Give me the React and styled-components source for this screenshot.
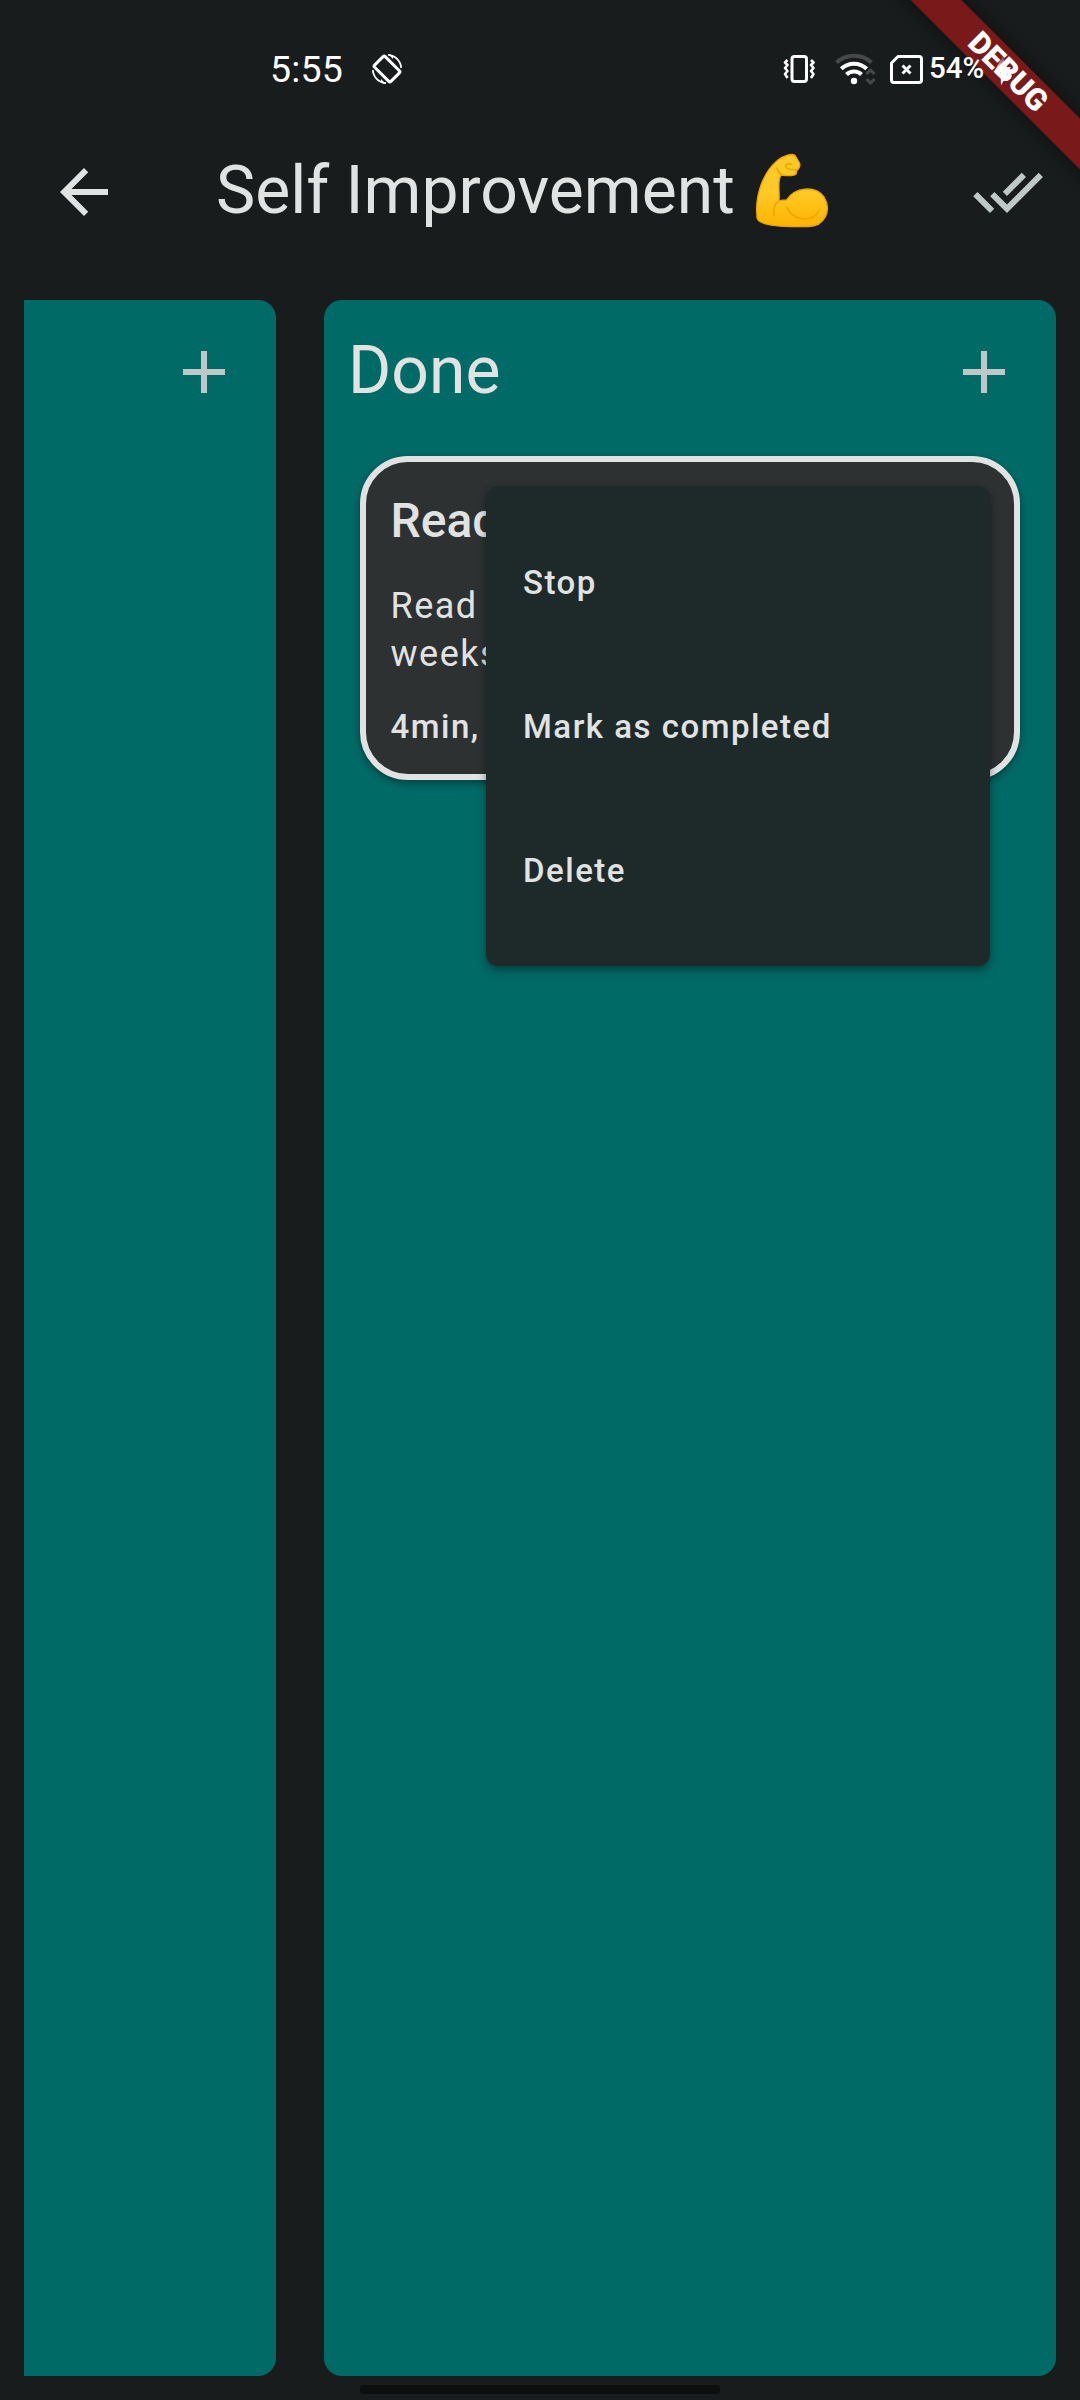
import React from "react";
import styled, { createGlobalStyle } from "styled-components";

const Global = createGlobalStyle`
  * { box-sizing: border-box; }
  body { margin: 0; background: #191c1c; }
`;

const Screen = styled.div`
  position: relative;
  width: 1080px;
  height: 2400px;
  overflow: hidden;
  display: flex;
  flex-direction: column;
  background: #191c1c;
  color: #e1e3e2;
  font-family: Roboto, sans-serif;
`;

const StatusBar = styled.div`
  position: relative;
  z-index: 2;
  height: 120px;
  flex: none;
  display: flex;
  align-items: center;
  justify-content: space-between;
  padding: 18px 68px 0 270px;
  color: #fff;
`;

const StatusGroup = styled.div`
  display: flex;
  align-items: center;
`;

const Clock = styled.span`
  font: 400 37.5px/44px Roboto, sans-serif;
  letter-spacing: 0.2px;
  margin-right: 28px;
`;

const Percent = styled.span`
  width: 58px;
  font: 500 29.5px/34px Roboto, sans-serif;
  margin: 0 0 2px 6px;
`;

const Icon = styled.svg`
  display: block;
  flex: none;
  margin-left: ${(p) => p.$gap || 0}px;
`;

const AppBar = styled.header`
  height: 144px;
  flex: none;
  display: flex;
  align-items: center;
  padding: 0 36px 0 48px;
`;

const Title = styled.h1`
  flex: 1;
  margin: 0 0 3px 96px;
  display: flex;
  align-items: center;
  font: 400 66px/86px Roboto, sans-serif;
`;

const Board = styled.main`
  flex: none;
  height: 2076px;
  margin: 36px 24px 0;
  display: flex;
  gap: 48px;
`;

const Column = styled.section`
  width: ${(p) => (p.$cut ? 252 : 732)}px;
  flex: none;
  background: #006a67;
  border-radius: ${(p) => (p.$cut ? "0 18px 18px 0" : "18px")};
`;

const ColumnHeader = styled.div`
  height: 144px;
  display: flex;
  align-items: center;
  justify-content: space-between;
  padding: 0 36px 0 24px;
`;

const ColumnTitle = styled.h2`
  margin: 0 0 3px;
  font: 400 66px/86px Roboto, sans-serif;
`;

const Card = styled.article`
  margin: 12px 36px 0;
  height: 324px;
  padding: 31px 24px 0 24.5px;
  border: 6px solid #e1e3e2;
  border-radius: 48px;
  background: #2d3131;
  box-shadow: 0 3px 6px rgba(0, 0, 0, 0.28), 0 3px 9px rgba(0, 0, 0, 0.16);
`;

const CardTitle = styled.h3`
  margin: 0;
  font: 500 48px/56px Roboto, sans-serif;
`;

const CardText = styled.p`
  margin: 33px 0 0;
  font: 400 36px/48px Roboto, sans-serif;
  letter-spacing: 1.5px;
`;

const CardMeta = styled.p`
  margin: 25px 0 0;
  font: 500 33px/48px Roboto, sans-serif;
  letter-spacing: 1.5px;
`;

const Menu = styled.ul`
  position: absolute;
  left: 486px;
  top: 486px;
  width: 504px;
  margin: 0;
  padding: 25px 0 23px;
  list-style: none;
  border-radius: 12px;
  background: #1e2a2a;
  box-shadow: 0 3px 6px rgba(0, 0, 0, 0.28), 0 6px 12px rgba(0, 0, 0, 0.16);
`;

const MenuItem = styled.li`
  height: 144px;
  display: flex;
  align-items: center;
  padding: 0 36px 0 37px;
  font: 500 33px/48px Roboto, sans-serif;
  letter-spacing: 1.5px;
`;

const DebugBanner = styled.div`
  position: absolute;
  left: 858px;
  top: 54px;
  width: 300px;
  height: 36px;
  transform: rotate(45deg);
  background: #7a191a;
  box-shadow: 0 0 18px rgba(0, 0, 0, 0.5);
  color: #fff;
  text-align: center;
  font: 900 30.6px/36px Roboto, sans-serif;
`;

const HomeHandle = styled.div`
  flex: none;
  align-self: center;
  width: 360px;
  height: 9px;
  margin-top: 9px;
  border-radius: 4px;
  background: #0d0f0f;
`;

const RotateIcon = () => (
  <Icon width="32" height="32" viewBox="0 0 32 32" fill="none" stroke="#fff">
    <rect x="8.500" y="4.500" width="15" height="23" rx="1.500" strokeWidth="3" transform="rotate(-45 16 16)" />
    <path d="M17 1.800A14.200 14.200 0 0 1 30.200 15M15 30.200A14.200 14.200 0 0 1 1.800 17" strokeWidth="1.800" />
    <path d="M17 1L22 6V2.500ZM15 31L10 26V29.500Z" fill="#fff" stroke="none" />
  </Icon>
);

const VibrateIcon = () => (
  <Icon width="32" height="30" viewBox="0 0 32 30" fill="none" stroke="#fff" strokeLinejoin="round">
    <rect x="9" y="2.500" width="14.500" height="25" rx="2.500" strokeWidth="3" />
    <path d="M4.500 6L2 8.500L4.500 11L2 14L4.500 17L2 20L4.500 24M28 6L30.500 8.500L28 11L30.500 14L28 17L30.500 20L28 24" strokeWidth="2.600" />
  </Icon>
);

const WifiIcon = () => (
  <Icon $gap="20" width="42" height="32" viewBox="0 0 42 32" fill="none" stroke="#fff" strokeWidth="4">
    <path d="M1.500 9.500A26 26 0 0 1 36.500 9.500" stroke="#474949" />
    <path d="M6.300 15.800A18.500 18.500 0 0 1 31.700 15.800" />
    <path d="M11.500 21.500A10.800 10.800 0 0 1 26.500 21.500" />
    <circle cx="19" cy="28" r="3.200" fill="#fff" stroke="none" />
    <path d="M31.500 21L35.500 17L39.500 21M31.500 26L35.500 30L39.500 26" stroke="#474949" strokeWidth="3" />
  </Icon>
);

const SimIcon = () => (
  <Icon $gap="13" width="33" height="29" viewBox="0 0 33 29" fill="none" stroke="#fff" strokeWidth="3">
    <path d="M8 1.500H29Q31.500 1.500 31.500 4V25Q31.500 27.500 29 27.500H4Q1.500 27.500 1.500 25V8Z" strokeLinejoin="round" />
    <path d="M12.500 10.500L20.500 18.500M20.500 10.500L12.500 18.500" />
  </Icon>
);

const BoltIcon = () => (
  <Icon $gap="7" width="18" height="34" viewBox="0 0 18 34">
    <defs>
      <linearGradient id="bolt" x1="0" y1="0" x2="0" y2="1">
        <stop offset="0.150" stopColor="#fff" stopOpacity="0.200" />
        <stop offset="0.500" stopColor="#fff" />
      </linearGradient>
    </defs>
    <path d="M10 2L0 20H6.500L7 33.500L17 15H10.500Z" fill="url(#bolt)" />
  </Icon>
);

const BackIcon = () => (
  <Icon width="72" height="72" viewBox="0 0 24 24" fill="#e1e3e2">
    <path d="M20 11H7.830l5.590-5.590L12 4l-8 8 8 8 1.410-1.410L7.830 13H20v-2z" />
  </Icon>
);

const DoneAllIcon = () => (
  <Icon width="72" height="72" viewBox="0 0 24 24" fill="#bec9c7">
    <path d="M18 7l-1.410-1.410-6.340 6.340 1.410 1.410L18 7zm4.240-1.410L11.660 16.170 7.480 12l-1.410 1.410L11.660 19l12-12-1.420-1.410zM.410 13.410L6 19l1.410-1.410L1.830 12 .410 13.410z" />
  </Icon>
);

const AddIcon = () => (
  <Icon width="72" height="72" viewBox="0 0 24 24" fill="#bec9c7">
    <path d="M19 13h-6v6h-2v-6H5v-2h6V5h2v6h6v2z" />
  </Icon>
);

const FlexedArm = () => (
  <Icon $gap="18" width="78" height="78" viewBox="8 7 78 78" fill="none" role="img" aria-label="Flexed biceps">
    <defs>
      <linearGradient id="skin" x1="0" y1="0" x2="0" y2="1">
        <stop offset="0.500" stopColor="#ffca28" />
        <stop offset="1" stopColor="#ffb300" />
      </linearGradient>
    </defs>
    <path
      d="M12 71C10 52 17 28 33 15Q40 10 47 9.500Q50 9.500 51 12L54.500 18Q56 22 52 25L51 29Q49 31.500 36 30C32 36 35 47 34 56Q37 55 41.500 55C50 42 70 40 79 52C87 65 80 81.500 63 81.500C45 82 22 82 14 76Q11.500 74 12 71Z"
      fill="url(#skin)"
      stroke="#f0a500"
      strokeWidth="1.300"
      strokeLinejoin="round"
    />
    <path
      d="M47 19.500Q42 17.500 40.500 21Q41 25.500 53 24.500M32 23Q33 28.500 38 30M34 56Q27.500 60 29 71M41.500 62Q48 74 59 74Q70 74 74 66"
      stroke="#f0a500"
      strokeWidth="1.600"
      strokeLinecap="round"
    />
  </Icon>
);

const items = ["Stop", "Mark as completed", "Delete"];

export default function App() {
  return (
    <Screen>
      <Global />
      <StatusBar>
        <StatusGroup>
          <Clock>5:55</Clock>
          <RotateIcon />
        </StatusGroup>
        <StatusGroup>
          <VibrateIcon />
          <WifiIcon />
          <SimIcon />
          <Percent>54%</Percent>
          <BoltIcon />
        </StatusGroup>
      </StatusBar>
      <AppBar>
        <BackIcon />
        <Title>
          Self Improvement
          <FlexedArm />
        </Title>
        <DoneAllIcon />
      </AppBar>
      <Board>
        <Column $cut>
          <ColumnHeader>
            <span />
            <AddIcon />
          </ColumnHeader>
        </Column>
        <Column>
          <ColumnHeader>
            <ColumnTitle>Done</ColumnTitle>
            <AddIcon />
          </ColumnHeader>
          <Card>
            <CardTitle>Read</CardTitle>
            <CardText>
              Read
              <br />
              weeks
            </CardText>
            <CardMeta>4min,</CardMeta>
          </Card>
        </Column>
      </Board>
      <HomeHandle />
      <Menu>
        {items.map((label) => (
          <MenuItem key={label}>{label}</MenuItem>
        ))}
      </Menu>
      <DebugBanner>DEBUG</DebugBanner>
    </Screen>
  );
}
